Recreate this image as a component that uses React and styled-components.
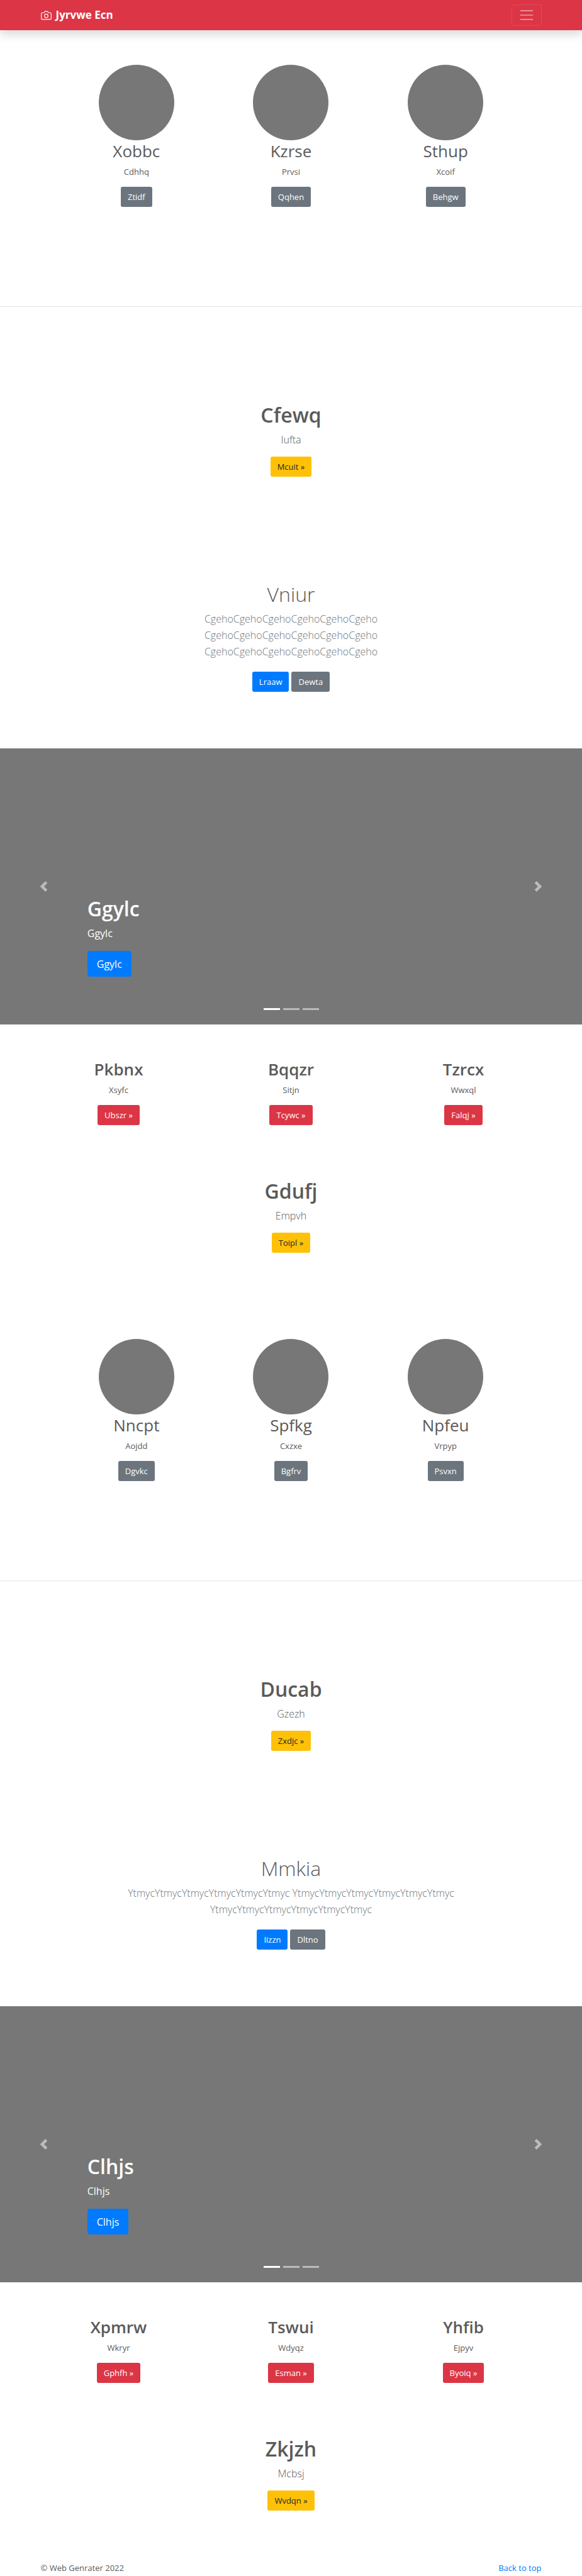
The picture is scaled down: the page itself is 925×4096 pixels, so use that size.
import React from "react";
import styled, { createGlobalStyle, css } from "styled-components";

const GlobalStyle = createGlobalStyle`
  *, *::before, *::after { box-sizing: border-box; }
  body {
    margin: 0;
    background: #fff;
    color: #5a5a5a;
    font-family: "Segoe UI", "Open Sans", "Noto Sans", sans-serif;
    font-size: 13px;
    line-height: 20px;
  }
`;

const Container = styled.div`
  width: 100%;
  max-width: 822px;
  margin: 0 auto;
  padding: 0 13px;
`;

const Navbar = styled.header`
  background: #dc3545;
  box-shadow: 0 7px 14px rgba(0, 0, 0, 0.15);
`;

const NavInner = styled(Container)`
  display: flex;
  align-items: center;
  justify-content: space-between;
  min-height: 48px;
`;

const Brand = styled.a`
  display: flex;
  align-items: center;
  gap: 7px;
  color: #fff;
  font-size: 17px;
  font-weight: 700;
  line-height: 26px;
  text-decoration: none;
`;

const Toggler = styled.button`
  display: flex;
  padding: 3px 10px;
  background: transparent;
  border: 1px solid rgba(255, 255, 255, 0.1);
  border-radius: 4px;
  color: rgba(255, 255, 255, 0.5);
`;

const tones = {
  primary: css`background: #007bff; color: #fff;`,
  secondary: css`background: #6c757d; color: #fff;`,
  danger: css`background: #dc3545; color: #fff;`,
  warning: css`background: #ffc107; color: #212529;`,
};

const Button = styled.a`
  display: inline-block;
  padding: ${(p) => (p.$large ? "8px 15px 7px" : "6px 11px")};
  border-radius: ${(p) => (p.$large ? "4px" : "3px")};
  font-size: ${(p) => (p.$large ? "16px" : "13px")};
  line-height: ${(p) => (p.$large ? "26px" : "20px")};
  text-decoration: none;
  ${(p) => tones[p.$tone]}
`;

const Actions = styled.div`
  display: flex;
  justify-content: center;
  gap: 4px;
  margin-top: ${(p) => (p.$loose ? "19px" : "14px")};
`;

const ProfileRow = styled.section`
  display: grid;
  grid-template-columns: repeat(3, 1fr);
  width: 100%;
  max-width: 737px;
  margin: 0 auto;
  text-align: center;
`;

const FeatureRow = styled.section`
  display: grid;
  grid-template-columns: repeat(3, 1fr);
  width: 100%;
  max-width: 822px;
  margin: 0 auto;
  padding: 54px 0 83px;
  text-align: center;
`;

const Avatar = styled.div`
  width: 120px;
  height: 120px;
  margin: 0 auto;
  border-radius: 50%;
  background: #777;
`;

const CardTitle = styled.h2`
  margin: 0 0 6px;
  font-size: 26px;
  font-weight: ${(p) => (p.$strong ? 600 : 400)};
  line-height: 34px;
`;

const Text = styled.p`
  margin: 0;
`;

const Divider = styled.hr`
  margin: 158px 0 150px;
  border: 0;
  border-top: 1px solid rgba(0, 0, 0, 0.1);
`;

const Intro = styled.section`
  text-align: center;
  padding-bottom: ${(p) => p.$after};
`;

const Title = styled.h1`
  margin: 0 0 5px;
  font-size: 32px;
  font-weight: ${(p) => (p.$light ? 300 : 600)};
  line-height: 43px;
`;

const Lead = styled.p`
  max-width: 540px;
  margin: 0 auto;
  color: ${(p) => (p.$muted ? "#6c757d" : "inherit")};
  font-size: 16px;
  font-weight: 300;
  line-height: 26px;
`;

const CarouselFrame = styled.section`
  position: relative;
  display: grid;
  grid-template-columns: 15% 1fr 15%;
  min-height: 439px;
  background: #777;
  color: #fff;
`;

const Control = styled.button`
  display: flex;
  align-items: center;
  justify-content: center;
  padding: 0;
  background: none;
  border: 0;
  color: #fff;
  opacity: 0.5;
`;

const Caption = styled.div`
  align-self: end;
  padding-bottom: 76px;
`;

const CaptionText = styled.p`
  margin: 0 0 15px;
  font-size: 16px;
  line-height: 26px;
`;

const CaptionButton = styled(Button)`
  display: block;
  width: max-content;
`;

const Indicators = styled.div`
  position: absolute;
  left: 0;
  right: 0;
  bottom: 23px;
  display: flex;
  justify-content: center;
  gap: 5px;
`;

const Indicator = styled.button`
  width: 26px;
  height: 3px;
  padding: 0;
  border: 0;
  background: #fff;
  opacity: ${(p) => (p.$active ? 1 : 0.5)};
`;

const Footer = styled(Container)`
  display: flex;
  justify-content: space-between;
  padding-bottom: 2px;
`;

const FooterLink = styled.a`
  color: #007bff;
  text-decoration: none;
`;

const Main = styled.main`
  padding-top: 55px;
`;

function CameraIcon() {
  return (
    <svg width="17" height="17" viewBox="0 0 24 24" fill="none" stroke="currentColor" strokeWidth="1.6" strokeLinecap="round" strokeLinejoin="round" aria-hidden="true">
      <path d="M23 19a2 2 0 0 1-2 2H3a2 2 0 0 1-2-2V8a2 2 0 0 1 2-2h4l2-3h6l2 3h4a2 2 0 0 1 2 2z" />
      <circle cx="12" cy="13" r="4" />
    </svg>
  );
}

function MenuIcon() {
  return (
    <svg width="26" height="26" viewBox="0 0 30 30" stroke="currentColor" strokeWidth="2" strokeLinecap="round" aria-hidden="true">
      <path d="M4 7h22M4 15h22M4 23h22" />
    </svg>
  );
}

function Arrow({ d }) {
  return (
    <svg width="17" height="17" viewBox="0 0 8 8" fill="currentColor" aria-hidden="true">
      <path d={d} />
    </svg>
  );
}

function Profiles({ items }) {
  return (
    <ProfileRow>
      {items.map(([name, text, action]) => (
        <div key={name}>
          <Avatar />
          <CardTitle>{name}</CardTitle>
          <Text>{text}</Text>
          <Actions><Button href="#" $tone="secondary">{action}</Button></Actions>
        </div>
      ))}
    </ProfileRow>
  );
}

function Features({ items }) {
  return (
    <FeatureRow>
      {items.map(([name, text, action]) => (
        <div key={name}>
          <CardTitle $strong>{name}</CardTitle>
          <Text>{text}</Text>
          <Actions><Button href="#" $tone="danger">{action} »</Button></Actions>
        </div>
      ))}
    </FeatureRow>
  );
}

function Highlight({ item: [name, text, action], after }) {
  return (
    <Intro $after={after}>
      <Title>{name}</Title>
      <Lead>{text}</Lead>
      <Actions><Button href="#" $tone="warning">{action} »</Button></Actions>
    </Intro>
  );
}

function Album({ title, text, actions }) {
  return (
    <Intro $after="90px">
      <Title $light>{title}</Title>
      <Lead $muted>{text}</Lead>
      <Actions $loose>
        <Button href="#" $tone="primary">{actions[0]}</Button>
        <Button href="#" $tone="secondary">{actions[1]}</Button>
      </Actions>
    </Intro>
  );
}

function Carousel({ label }) {
  return (
    <CarouselFrame>
      <Control type="button" aria-label="Previous">
        <Arrow d="M5.25 0l-4 4 4 4 1.5-1.5-2.5-2.5 2.5-2.5-1.5-1.5z" />
      </Control>
      <Caption>
        <Title>{label}</Title>
        <CaptionText>{label}</CaptionText>
        <CaptionButton href="#" $tone="primary" $large>{label}</CaptionButton>
      </Caption>
      <Control type="button" aria-label="Next">
        <Arrow d="M2.75 0l-1.5 1.5 2.5 2.5-2.5 2.5 1.5 1.5 4-4-4-4z" />
      </Control>
      <Indicators>
        {[1, 2, 3].map((n) => (
          <Indicator key={n} type="button" aria-label={`Slide ${n}`} $active={n === 1} />
        ))}
      </Indicators>
    </CarouselFrame>
  );
}

const blocks = [
  {
    profiles: [["Xobbc", "Cdhhq", "Ztidf"], ["Kzrse", "Prvsi", "Qqhen"], ["Sthup", "Xcoif", "Behgw"]],
    intro: ["Cfewq", "Iufta", "Mcuit"],
    album: {
      title: "Vniur",
      text: "CgehoCgehoCgehoCgehoCgehoCgeho CgehoCgehoCgehoCgehoCgehoCgeho CgehoCgehoCgehoCgehoCgehoCgeho",
      actions: ["Lraaw", "Dewta"],
    },
    slide: "Ggylc",
    features: [["Pkbnx", "Xsyfc", "Ubszr"], ["Bqqzr", "Sitjn", "Tcywc"], ["Tzrcx", "Wwxql", "Falqj"]],
    outro: ["Gdufj", "Empvh", "Toipl"],
    after: "137px",
  },
  {
    profiles: [["Nncpt", "Aojdd", "Dgvkc"], ["Spfkg", "Cxzxe", "Bgfrv"], ["Npfeu", "Vrpyp", "Psvxn"]],
    intro: ["Ducab", "Gzezh", "Zxdjc"],
    album: {
      title: "Mmkia",
      text: "YtmycYtmycYtmycYtmycYtmycYtmyc YtmycYtmycYtmycYtmycYtmycYtmyc YtmycYtmycYtmycYtmycYtmycYtmyc",
      actions: ["Iizzn", "Dltno"],
    },
    slide: "Clhjs",
    features: [["Xpmrw", "Wkryr", "Gphfh"], ["Tswui", "Wdyqz", "Esman"], ["Yhfib", "Ejpyv", "Byoiq"]],
    outro: ["Zkjzh", "Mcbsj", "Wvdqn"],
    after: "81px",
  },
];

export default function App() {
  return (
    <>
      <GlobalStyle />
      <Navbar>
        <NavInner>
          <Brand href="#"><CameraIcon />Jyrvwe Ecn</Brand>
          <Toggler type="button" aria-label="Toggle navigation"><MenuIcon /></Toggler>
        </NavInner>
      </Navbar>
      <Main>
        {blocks.map((b) => (
          <React.Fragment key={b.slide}>
            <Profiles items={b.profiles} />
            <Divider />
            <Highlight item={b.intro} after="165px" />
            <Album {...b.album} />
            <Carousel label={b.slide} />
            <Features items={b.features} />
            <Highlight item={b.outro} after={b.after} />
          </React.Fragment>
        ))}
      </Main>
      <Footer as="footer">
        <Text>© Web Genrater 2022</Text>
        <FooterLink href="#">Back to top</FooterLink>
      </Footer>
    </>
  );
}
